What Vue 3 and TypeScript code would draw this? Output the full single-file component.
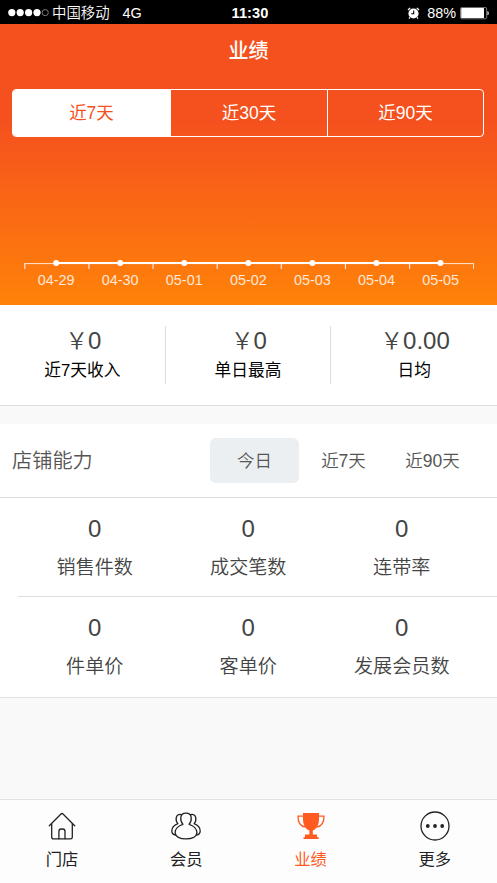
<script setup lang="ts">
import { ref } from 'vue'

interface Metric {
  value: string
  label: string
}

interface Amount {
  amount: string
  label: string
}

const ranges: string[] = ['近7天', '近30天', '近90天']
const activeRange = ref<number>(0)

const dates: string[] = ['04-29', '04-30', '05-01', '05-02', '05-03', '05-04', '05-05']
const slot = 450 / 7
const points: number[] = dates.map((_, i) => 32.2 + i * 64.05)
const ticks: number[] = Array.from({ length: 8 }, (_, i) => 0.8 + i * (slot - 0.16))

const summary: Amount[] = [
  { amount: '0', label: '近7天收入' },
  { amount: '0', label: '单日最高' },
  { amount: '0.00', label: '日均' },
]

const periods: string[] = ['今日', '近7天', '近90天']
const activePeriod = ref<number>(0)

const rows: Metric[][] = [
  [
    { value: '0', label: '销售件数' },
    { value: '0', label: '成交笔数' },
    { value: '0', label: '连带率' },
  ],
  [
    { value: '0', label: '件单价' },
    { value: '0', label: '客单价' },
    { value: '0', label: '发展会员数' },
  ],
]

const tabs = [
  { id: 'store', label: '门店' },
  { id: 'member', label: '会员' },
  { id: 'result', label: '业绩' },
  { id: 'more', label: '更多' },
]
const activeTab = ref<string>('result')
</script>

<template>
  <div class="screen">
    <div class="status">
      <div class="status-left">
        <svg class="signal" width="42" height="10" viewBox="0 0 42 10">
          <circle v-for="n in 4" :key="n" :cx="3.8 + (n - 1) * 8.4" cy="4.6" r="3.6" fill="#fff" />
          <circle cx="37.2" cy="4.6" r="3.1" fill="none" stroke="#aaa" stroke-width="0.7" />
        </svg>
        <span class="carrier">中国移动</span>
        <span class="network">4G</span>
      </div>
      <div class="clock">11:30</div>
      <div class="status-right">
        <svg class="alarm" width="13" height="13" viewBox="0 0 13 13">
          <circle cx="6.5" cy="6.5" r="5.1" fill="#fff" />
          <path d="M1 3 3.2 0.9M12 3 9.8 0.9M2.9 10.4 2 11.6M10.1 10.4 11 11.6" stroke="#fff" stroke-width="1.3" />
          <path d="M6.7 3.5V6.8H4.2" fill="none" stroke="#000" stroke-width="1.1" />
        </svg>
        <span class="percent">88%</span>
        <svg class="battery" width="30" height="13" viewBox="0 0 30 13">
          <rect x="0.5" y="0.4" width="26.2" height="11.4" rx="1.6" fill="none" stroke="#999" stroke-width="0.8" />
          <rect x="1.2" y="1.1" width="22.8" height="10" rx="0.6" fill="#fff" />
          <path d="M27.8 4.4Q29.3 6.1 27.8 8Z" fill="#ddd" stroke="#ddd" stroke-width="0.6" />
        </svg>
      </div>
    </div>

    <section class="hero">
      <h1>业绩</h1>
      <div class="segments">
        <button
          v-for="(r, i) in ranges"
          :key="r"
          :class="['segment', { active: activeRange === i }]"
          @click="activeRange = i"
        >{{ r }}</button>
      </div>
      <div class="chart">
        <svg width="450" height="14" viewBox="0 0 450 14">
          <path d="M0.3 5.6H450" stroke="#ffe6d6" stroke-width="1" />
          <path v-for="t in ticks" :key="t" :d="`M${t} 5.6V11`" stroke="#ffe6d6" stroke-width="1.2" />
          <path d="M32.2 4.9H416.5" stroke="#fff" stroke-width="2" />
          <circle v-for="p in points" :key="p" :cx="p" cy="5" r="3" fill="#fff" />
        </svg>
        <div class="dates">
          <span v-for="d in dates" :key="d">{{ d }}</span>
        </div>
      </div>
    </section>

    <section class="summary">
      <div v-for="s in summary" :key="s.label" class="summary-item">
        <div class="summary-value"><span class="yen">￥</span>{{ s.amount }}</div>
        <div class="summary-label">{{ s.label }}</div>
      </div>
    </section>

    <section class="ability">
      <header>
        <h2>店铺能力</h2>
        <div class="periods">
          <button
            v-for="(p, i) in periods"
            :key="p"
            :class="['period', { active: activePeriod === i }]"
            @click="activePeriod = i"
          >{{ p }}</button>
        </div>
      </header>
      <div v-for="(row, i) in rows" :key="i" class="row">
        <div v-for="m in row" :key="m.label" class="metric">
          <div class="metric-value">{{ m.value }}</div>
          <div class="metric-label">{{ m.label }}</div>
        </div>
      </div>
    </section>

    <nav class="tabs">
      <a v-for="t in tabs" :key="t.id" :class="['tab', { active: activeTab === t.id }]" @click="activeTab = t.id">
        <svg width="32" height="32" viewBox="0 0 32 32" fill="none" stroke="currentColor" stroke-width="1.3" stroke-linecap="round" stroke-linejoin="round">
          <template v-if="t.id === 'store'">
            <path d="M3.3 15.8 15 4Q16 3 17 4L28.7 15.8" />
            <path d="M5.7 14V27Q5.7 28.9 7.5 28.9H24.6Q26.3 28.9 26.3 27V14" />
            <path d="M12.9 28.7V21.5Q12.9 19 15.2 19H16.6Q19 19 19 21.5V28.7" />
          </template>
          <template v-else-if="t.id === 'member'">
            <path d="M12.9 14.3C11.2 12.6 10.6 10.2 10.8 7.6C11 4.8 13.2 3.1 16 3.1S21 4.8 21.2 7.6C21.4 10.2 20.8 12.6 19.1 14.3C23.7 15.6 26.9 19 26.9 22.6C26.9 26.8 21.9 28.9 16 28.9S5.1 26.8 5.1 22.6C5.1 19 8.3 15.6 12.9 14.3Z" />
            <path d="M11.4 4.6C8.6 3.7 6.6 5.3 6.2 7.8C5.9 10.2 6.3 12.1 7.9 13.6C4.1 15 1.8 17.9 1.8 20.9C1.8 23.3 3.4 24.6 5.7 25.2" />
            <path d="M20.6 4.6C23.4 3.7 25.4 5.3 25.8 7.8C26.1 10.2 25.7 12.1 24.1 13.6C27.9 15 30.2 17.9 30.2 20.9C30.2 23.3 28.6 24.6 26.3 25.2" />
          </template>
          <template v-else-if="t.id === 'result'">
            <path d="M8 3H24V6.3C24.4 13.5 22.6 18.6 17.8 20.6V24.6H22V27.3H23.7V29H8.5V27.3H10V24.6H14.4V20.6C9.4 18.6 7.6 13.5 8 6.3Z" fill="currentColor" stroke="none" />
            <path d="M8 6.1H3C2.9 11.7 5 16.5 10.4 17.2M24 6.1H29C29.1 11.7 27 16.5 21.6 17.2" stroke-linecap="butt" stroke-linejoin="miter" />
          </template>
          <template v-else>
            <circle cx="16" cy="16" r="14" />
            <circle v-for="x in [8.8, 16, 23.2]" :key="x" :cx="x" cy="16" r="1.9" fill="currentColor" stroke="none" />
          </template>
        </svg>
        <span>{{ t.label }}</span>
      </a>
    </nav>
  </div>
</template>

<style>
body {
  margin: 0;
  background: #f9f9f9;
}
</style>

<style scoped>
.screen {
  display: flex;
  flex-direction: column;
  width: 497px;
  height: 883px;
  overflow: hidden;
  background: #f9f9f9;
  font-family: "Liberation Sans", "Noto Sans CJK SC", sans-serif;
  color: #444;
}

.screen * {
  box-sizing: border-box;
}

button {
  margin: 0;
  padding: 0;
  border: 0;
  background: none;
  font: inherit;
  color: inherit;
}

h1,
h2 {
  margin: 0;
}

.status {
  display: grid;
  grid-template-columns: 1fr auto 1fr;
  align-items: center;
  flex: none;
  height: 24px;
  padding: 1px 7px 0 8px;
  background: #000;
  color: #fff;
  font-size: 14.4px;
  line-height: 24px;
}

.status-left,
.status-right {
  display: flex;
  align-items: center;
}

.status-right {
  justify-content: flex-end;
}

.carrier {
  margin-left: 2px;
  font-weight: 350;
}

.network {
  margin-left: 13px;
}

.clock {
  padding-left: 2px;
  font-size: 14.6px;
  font-weight: 700;
  letter-spacing: 0.1px;
}

.percent {
  margin: 0 4px 0 7px;
}

.hero {
  flex: none;
  height: 281px;
  padding: 0 12px;
  background: linear-gradient(#f5511e 0%, #f5511e 35%, #ff8209 100%);
  color: #fff;
}

h1 {
  height: 65px;
  font-size: 20px;
  font-weight: 500;
  line-height: 55px;
  text-align: center;
}

.segments {
  display: grid;
  grid-template-columns: 158px 157px 1fr;
  height: 48px;
  margin-right: 1px;
  border: 1px solid #fff;
  border-radius: 4px;
  overflow: hidden;
}

.segment {
  font-size: 17.5px;
  line-height: 46px;
  border-right: 1px solid #fff;
}

.segment:last-child {
  border-right: 0;
}

.segment.active {
  background: #fff;
  color: #f5511e;
}

.chart {
  width: 450px;
  margin: 121px 0 0 12px;
}

.chart svg {
  display: block;
}

.dates {
  display: grid;
  grid-template-columns: repeat(7, 64.1px);
  color: #ffe6d6;
  font-size: 14.4px;
  line-height: 16px;
  text-align: center;
}

.summary {
  display: grid;
  grid-template-columns: repeat(3, 1fr);
  align-items: start;
  flex: none;
  height: 101px;
  padding-top: 21px;
  background: #fff;
  border-bottom: 1px solid #dfdfdf;
}

.summary-item {
  height: 58px;
  text-align: center;
  border-right: 1px solid #ddd;
}

.summary-item:last-child {
  border-right: 0;
}

.summary-value {
  height: 30px;
  padding-left: 2px;
  font-size: 24px;
  line-height: 30px;
}

.yen {
  font-size: 22.5px;
  font-weight: 350;
}

.summary-label {
  font-size: 16.7px;
  line-height: 29px;
  color: #000;
}

.ability {
  flex: none;
  margin-top: 18px;
  background: #fff;
  border-bottom: 1px solid #e0e0e0;
}

header {
  display: flex;
  align-items: center;
  justify-content: space-between;
  height: 74px;
  padding: 0 20px 0 12px;
  border-bottom: 1px solid #dedede;
}

h2 {
  padding-top: 2px;
  font-size: 20.2px;
  font-weight: 350;
  line-height: 45px;
  color: #555;
}

.periods {
  display: grid;
  grid-template-columns: repeat(3, 89px);
}

.period {
  height: 45px;
  padding-top: 1px;
  border-radius: 6px;
  font-size: 17.5px;
  font-weight: 350;
  line-height: 45px;
  color: #555;
}

.period.active {
  background: #ebeff2;
}

.row {
  display: grid;
  grid-template-columns: repeat(3, 153.5px);
  height: 98px;
  margin-left: 18px;
  padding-top: 16px;
}

.row + .row {
  height: 101px;
  border-top: 1px solid #dedede;
}

.metric {
  text-align: center;
}

.metric-value {
  height: 30px;
  font-size: 24px;
  line-height: 30px;
}

.metric-label {
  margin-top: 8px;
  font-size: 19.1px;
  font-weight: 350;
  line-height: 31px;
}

.tabs {
  display: grid;
  grid-template-columns: repeat(4, 1fr);
  flex: none;
  height: 84px;
  margin-top: auto;
  background: #fdfdfd;
  border-top: 1px solid #e2e2e2;
}

.tab {
  display: flex;
  flex-direction: column;
  align-items: center;
  padding-top: 10px;
  color: #222;
}

.tab span {
  margin-top: 5px;
  font-size: 16.3px;
  line-height: 24px;
}

.tab.active {
  color: #ff5a20;
}
</style>
